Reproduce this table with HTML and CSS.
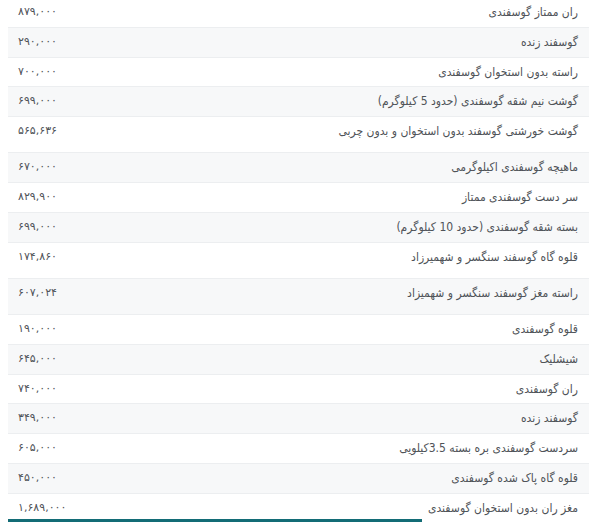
FILE: index.html
```html
<!DOCTYPE html>
<html lang="fa" dir="rtl">
<head>
<meta charset="utf-8">
<link rel="stylesheet" href="styles.css">
</head>
<body>
<div class="wrap">
<table class="prices">
<tbody>
<tr><td class="name">ران ممتاز گوسفندی</td><td class="price">۸۷۹,۰۰۰</td></tr>
<tr><td class="name">گوسفند زنده</td><td class="price">۲۹۰,۰۰۰</td></tr>
<tr><td class="name">راسته بدون استخوان گوسفندی</td><td class="price">۷۰۰,۰۰۰</td></tr>
<tr><td class="name">گوشت نیم شقه گوسفندی (حدود 5 کیلوگرم)</td><td class="price">۶۹۹,۰۰۰</td></tr>
<tr class="tall"><td class="name">گوشت خورشتی گوسفند بدون استخوان و بدون چربی</td><td class="price">۵۶۵,۶۳۶</td></tr>
<tr><td class="name">ماهیچه گوسفندی اکیلوگرمی</td><td class="price">۶۷۰,۰۰۰</td></tr>
<tr><td class="name">سر دست گوسفندی ممتاز</td><td class="price">۸۲۹,۹۰۰</td></tr>
<tr><td class="name">بسته شقه گوسفندی (حدود 10 کیلوگرم)</td><td class="price">۶۹۹,۰۰۰</td></tr>
<tr class="tall"><td class="name">قلوه گاه گوسفند سنگسر و شهمیرزاد</td><td class="price">۱۷۴,۸۶۰</td></tr>
<tr class="tall"><td class="name">راسته مغز گوسفند سنگسر و شهمیزاد</td><td class="price">۶۰۷,۰۲۴</td></tr>
<tr><td class="name">قلوه گوسفندی</td><td class="price">۱۹۰,۰۰۰</td></tr>
<tr><td class="name">شیشلیک</td><td class="price">۶۴۵,۰۰۰</td></tr>
<tr><td class="name">ران گوسفندی</td><td class="price">۷۴۰,۰۰۰</td></tr>
<tr><td class="name">گوسفند زنده</td><td class="price">۳۴۹,۰۰۰</td></tr>
<tr><td class="name">سردست گوسفندی بره بسته 3.5کیلویی</td><td class="price">۶۰۵,۰۰۰</td></tr>
<tr><td class="name">قلوه گاه پاک شده گوسفندی</td><td class="price">۴۵۰,۰۰۰</td></tr>
<tr class="last"><td class="name">مغز ران بدون استخوان گوسفندی</td><td class="price">۱,۶۸۹,۰۰۰</td></tr>
</tbody>
</table>
<div class="bar-row"><div class="bar"></div></div>
</div>
</body>
</html>
```
FILE: styles.css
```css
html, body {
  margin: 0;
  padding: 0;
  background: #ffffff;
  overflow: hidden;
}
body {
  font-family: "DejaVu Sans Condensed", "DejaVu Sans", sans-serif;
  color: #4f5358;
}
.wrap {
  margin-top: -3px;
  margin-left: 8px;
}
.prices {
  width: 100%;
  border-collapse: collapse;
  font-size: 12px;
}
.prices tr:nth-child(even) td {
  background: #f7f8f9;
}
.prices td {
  border-top: 1px solid #eceef0;
  padding: 5px 11px 5px 10px;
  line-height: 18.75px;
  vertical-align: top;
  white-space: nowrap;
}
.prices tr.tall td {
  padding-bottom: 11.5px;
}
.prices tr.last td {
  padding-bottom: 2px;
}
.prices td.name {
  text-align: right;
}
.prices td.price {
  text-align: left;
  width: 1%;
  font-family: "DejaVu Sans", sans-serif;
  font-size: 11px;
}
.bar-row {
  display: flex;
  direction: ltr;
}
.bar {
  width: 414px;
  height: 4px;
  background: #136c76;
}
```
